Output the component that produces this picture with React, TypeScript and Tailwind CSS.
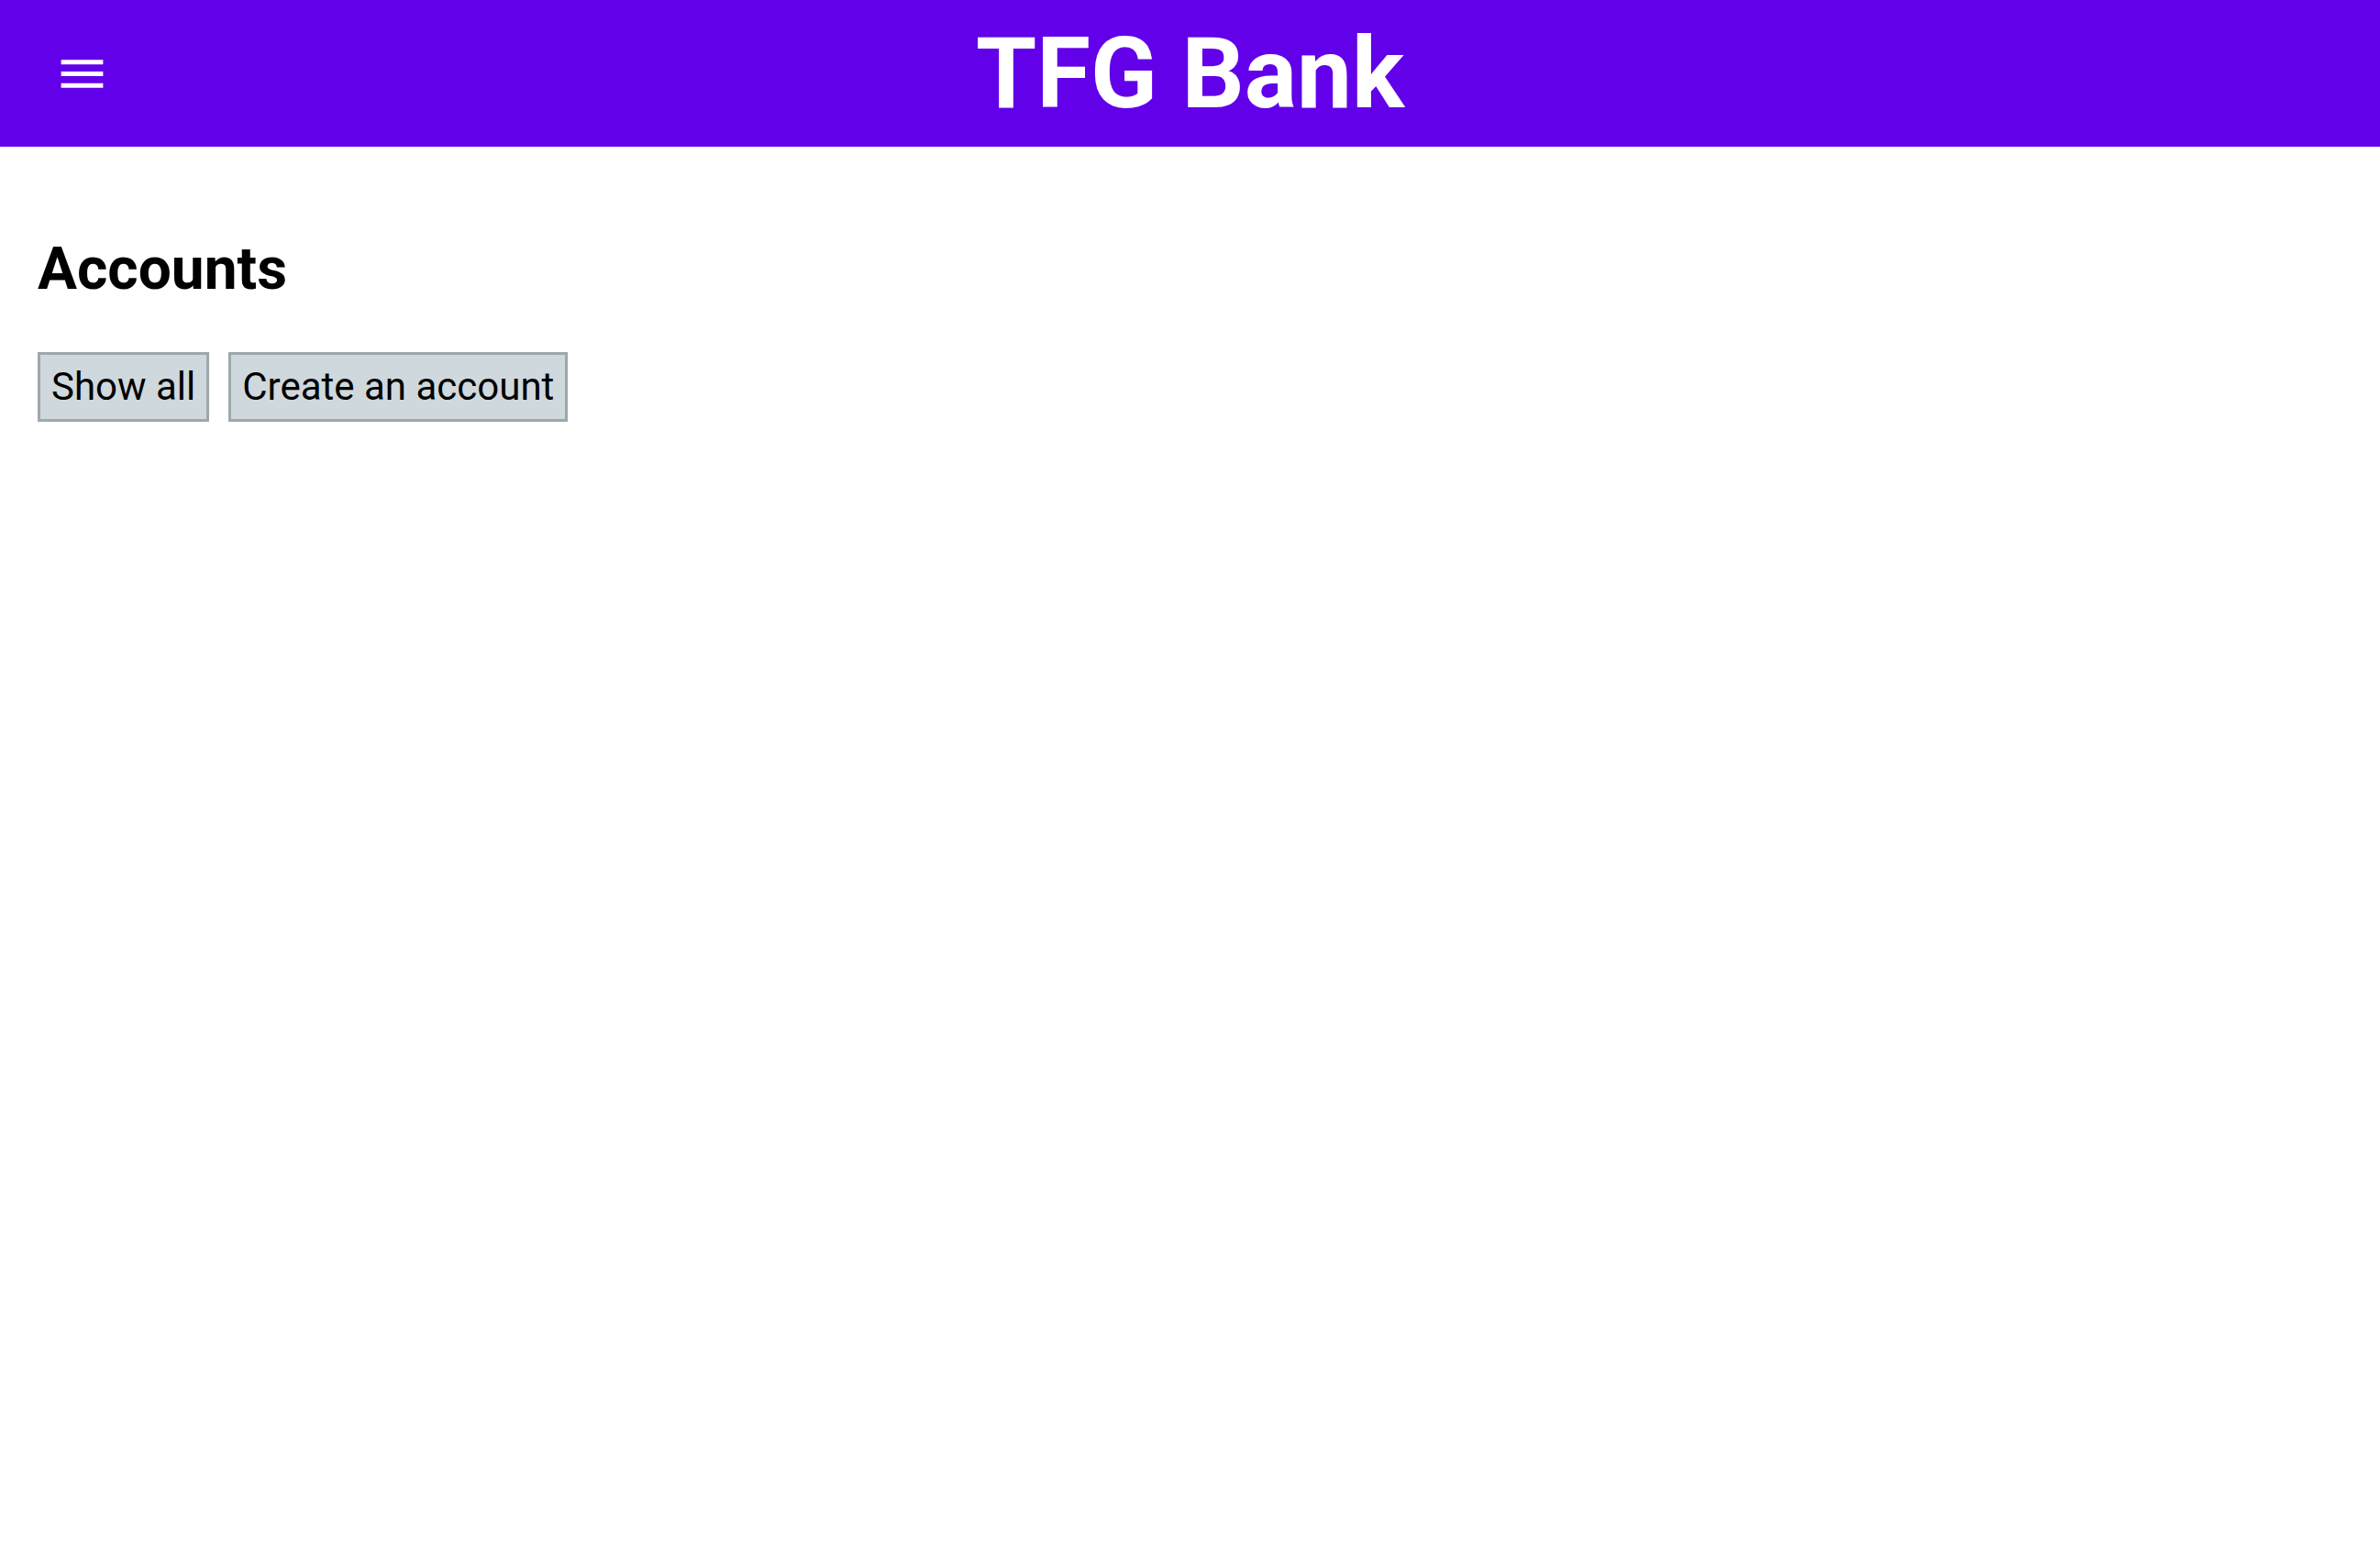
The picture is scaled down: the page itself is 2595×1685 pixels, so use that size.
function MenuIcon() {
  return (
    <svg width="61" height="61" viewBox="0 0 24 24" fill="white" aria-hidden="true">
      <path d="M3 18h18v-2H3v2zm0-5h18v-2H3v2zm0-7v2h18V6H3z" />
    </svg>
  )
}

export default function App() {
  return (
    <div className="min-h-screen bg-white font-['Roboto',sans-serif] text-black">
      <header className="grid h-[160px] grid-cols-[1fr_auto_1fr] items-center bg-[#6200ea]">
        <div className="flex items-center pl-[59px]">
          <button className="flex items-center">
            <MenuIcon />
          </button>
        </div>
        <h1 className="text-[107px] font-bold leading-none text-white">TFG Bank</h1>
        <div />
      </header>

      <main className="px-[41px] pt-[102px]">
        <h2 className="text-[64px] font-bold leading-none">Accounts</h2>
        <div className="mt-[58px] flex gap-[21px]">
          <button className="h-[76px] border-[3px] border-[#9ea7aa] bg-[#cfd8dc] px-[12px] text-[42px] leading-none">
            Show all
          </button>
          <button className="h-[76px] border-[3px] border-[#9ea7aa] bg-[#cfd8dc] px-[12px] text-[42px] leading-none">
            Create an account
          </button>
        </div>
      </main>
    </div>
  )
}
